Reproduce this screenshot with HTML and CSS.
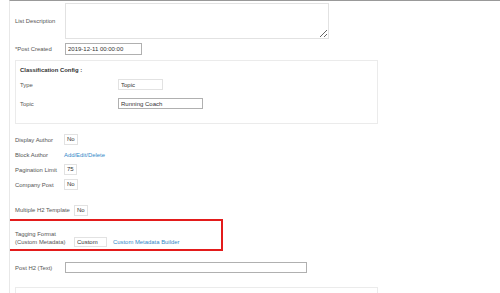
FILE: index.html
```html
<!DOCTYPE html>
<html>
<head>
<meta charset="utf-8">
<link rel="stylesheet" href="styles.css">
</head>
<body>
<div class="page">
  <div class="row r-desc">
    <label class="lbl">List Description</label>
    <textarea class="ta"></textarea>
  </div>
  <div class="row r-created">
    <label class="lbl">*Post Created</label>
    <input class="inp inp-dark w-created" value="2019-12-11 00:00:00">
  </div>
  <div class="config">
    <div class="config-title">Classification Config :</div>
    <div class="row r-type">
      <label class="lbl lbl-wide">Type</label>
      <input class="inp inp-light w-type" value="Topic">
    </div>
    <div class="row r-topic">
      <label class="lbl lbl-wide">Topic</label>
      <input class="inp inp-dark w-topic" value="Running Coach">
    </div>
  </div>
  <div class="row r-std first">
    <label class="lbl lbl-49">Display Author</label>
    <span class="val">No</span>
  </div>
  <div class="row r-std">
    <label class="lbl lbl-49">Block Author</label>
    <a class="link">Add/Edit/Delete</a>
  </div>
  <div class="row r-std">
    <label class="lbl lbl-49">Pagination Limit</label>
    <span class="val">75</span>
  </div>
  <div class="row r-std">
    <label class="lbl lbl-49">Company Post</label>
    <span class="val">No</span>
  </div>
  <div class="row r-multi">
    <label class="lbl lbl-59">Multiple H2 Template</label>
    <span class="val">No</span>
  </div>
  <div class="row r-tag">
    <label class="lbl lbl-59 two">Tagging Format<br>(Custom Metadata)</label>
    <input class="inp inp-light w-custom" value="Custom">
    <a class="link link-builder">Custom Metadata Builder</a>
    <div class="highlight"></div>
  </div>
  <div class="row r-h2">
    <label class="lbl">Post H2 (Text)</label>
    <input class="inp inp-dark w-h2" value="">
  </div>
  <div class="config next"></div>
</div>
</body>
</html>
```
FILE: styles.css
```css
html, body {
  margin: 0;
  padding: 0;
  background: #fff;
}
body {
  font-family: "Liberation Sans", Arial, sans-serif;
  font-size: 5.9px;
  color: #555;
  overflow: hidden;
}
.page {
  box-sizing: border-box;
  height: 293px;
  overflow: hidden;
  margin-left: 9px;
  border-left: 1px solid #e8e8e8;
  border-top: 1px solid #999;
  padding: 2px 0 0 5px;
}
.row {
  display: flex;
  align-items: center;
}
.lbl {
  width: 50px;
  flex: none;
  line-height: 8px;
  white-space: nowrap;
}
.lbl-wide { width: 98px; }
.lbl-49 { width: 49px; }
.lbl-59 { width: 59px; }
.r-desc {
  height: 36px;
  margin-bottom: 4px;
}
.ta {
  box-sizing: border-box;
  width: 264px;
  height: 36px;
  margin: 0;
  border: 1px solid #e2e2e2;
  resize: both;
  padding: 0;
}
.r-created {
  height: 12px;
  margin-bottom: 5px;
}
.inp {
  box-sizing: border-box;
  height: 11px;
  margin: 0;
  padding: 0 0 0 2px;
  font-family: "Liberation Sans", Arial, sans-serif;
  font-size: 6px;
  color: #333;
  background: #fff;
  outline: none;
}
.inp-dark { border: 1px solid #b0b0b0; }
.inp-light { border: 1px solid #e2e2e2; }
.w-created { width: 77px; height: 12px; }
.w-type { width: 45px; }
.w-topic { width: 85px; }
.w-custom { width: 33px; height: 10px; align-self: flex-end; margin-bottom: -1px; }
.w-h2 { width: 242px; }
.config {
  box-sizing: border-box;
  width: 363px;
  height: 64px;
  border: 1px solid #ebebeb;
  padding: 5px 0 0 4px;
}
.config-title {
  font-weight: bold;
  color: #333;
  line-height: 8px;
}
.r-type { height: 11px; margin-top: 5px; }
.r-topic { height: 11px; margin-top: 8px; }
.r-std { height: 15px; }
.r-std.first { margin-top: 8px; }
.val {
  box-sizing: border-box;
  height: 11px;
  line-height: 9px;
  padding: 0 2px;
  border: 1px solid #e2e2e2;
  font-size: 6px;
  color: #333;
}
.link {
  color: #3389c8;
  line-height: 8px;
}
.r-multi { height: 14px; margin-top: 11px; }
.r-tag {
  position: relative;
  margin-top: 13px;
  align-items: flex-end;
}
.link-builder {
  margin-left: 6px;
  align-self: flex-end;
}
.highlight {
  position: absolute;
  left: -14px;
  top: -11px;
  width: 222px;
  height: 32px;
  box-sizing: border-box;
  border: 2px solid #e31b1b;
}
.r-h2 { height: 11px; margin-top: 16px; }
.config.next {
  margin-top: 14px;
  height: 30px;
}
```
